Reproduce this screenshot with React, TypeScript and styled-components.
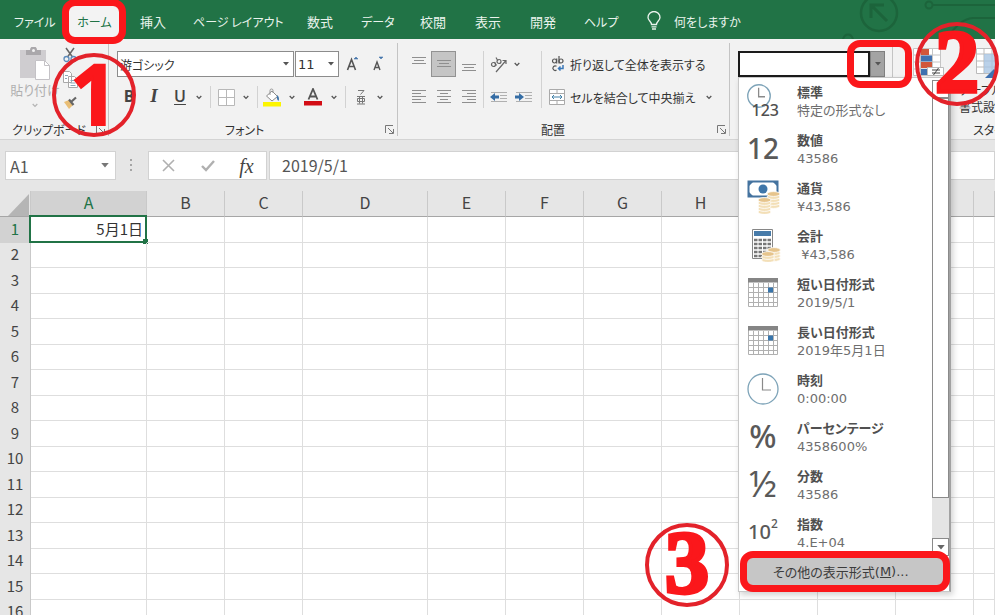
import React from 'react';
import styled, { createGlobalStyle, css } from 'styled-components';

const jp = `'Noto Sans CJK JP', sans-serif`;
const wide = `'DejaVu Sans', 'Noto Sans CJK JP', sans-serif`;
const red = '#fb171b';
const ring = '#e3222a';

const GlobalStyle = createGlobalStyle`
  * { box-sizing: border-box; }
  body { margin: 0; background: #fff; font-family: ${jp}; font-size: 13px; color: #444; overflow: hidden; }
  button, input, select { font: inherit; color: inherit; }
  svg { display: block; }
`;

const Page = styled.div`
  position: relative;
  height: 100vh;
  overflow: hidden;
  padding-right: 5px;
`;

/* Tabs */
const TabBar = styled.nav`
  position: relative;
  display: flex;
  align-items: flex-end;
  height: 39px;
  padding: 0 0 1px 14px;
  background: #217346;
  overflow: hidden;
`;
const Tab = styled.button<{ $w: number; $active?: boolean; $kana?: boolean }>`
  display: flex;
  align-items: center;
  flex: none;
  width: ${p => p.$w}px;
  height: 34px;
  padding: 0;
  border: 0;
  background: none;
  color: #eaf3ed;
  font-size: ${p => (p.$kana ? 12 : 13)}px;
  font-feature-settings: 'palt';
  white-space: nowrap;
  ${p => p.$active && css`
    justify-content: center;
    background: #f3f3f3;
    color: #217346;
  `}
`;
const Spacer = styled.span<{ $w: number }>`
  flex: none;
  width: ${p => p.$w}px;
`;
const Circuit = styled.svg`
  position: absolute;
  top: 0;
  right: 0;
`;

/* Ribbon */
const Ribbon = styled.section`
  display: flex;
  height: 101px;
  background: #f2f2f2;
  border-bottom: 1px solid #d4d4d4;
`;
const Group = styled.div<{ $w?: number; $pad?: number }>`
  position: relative;
  display: flex;
  flex-direction: column;
  justify-content: space-between;
  flex: ${p => (p.$w ? 'none' : '1 1 0')};
  width: ${p => (p.$w ? p.$w + 'px' : 'auto')};
  min-width: 0;
  overflow: ${p => (p.$w ? 'visible' : 'hidden')};
  padding: 12px 0 0 ${p => p.$pad || 0}px;
  &::after {
    content: '';
    position: absolute;
    right: 0;
    top: 4px;
    bottom: 3px;
    width: ${p => (p.$w ? 1 : 0)}px;
    background: #c4c4c4;
  }
`;
const GroupFooter = styled.div<{ $shift?: number }>`
  display: flex;
  align-items: center;
  justify-content: space-between;
  flex: none;
  height: 20px;
  padding: 0 4px 0 ${p => p.$shift || 0}px;
  color: #333;
  font-size: 12px;
  font-feature-settings: 'palt';
  white-space: nowrap;
`;
const Columns = styled.div`
  display: flex;
  align-items: flex-start;
`;
const Rows = styled.div`
  display: flex;
  flex-direction: column;
  gap: 7px;
`;
const Stack = styled.div`
  display: flex;
  flex-direction: column;
  margin-top: -8px;
`;
const Row = styled.div`
  display: flex;
  align-items: center;
  height: 26px;
`;
const Tool = styled.button<{ $w: number; $on?: boolean }>`
  display: flex;
  align-items: center;
  justify-content: center;
  flex: none;
  width: ${p => p.$w}px;
  height: 26px;
  padding: 0;
  border: ${p => (p.$on ? '1px solid #929292' : '0')};
  background: ${p => (p.$on ? '#c5c5c5' : 'none')};
  ${Stack} & { height: 24px; }
`;
const Glyph = styled.span<{ $kind: 'b' | 'i' | 'u' }>`
  font-family: ${p => (p.$kind === 'i' ? "'Liberation Serif', serif" : "'Open Sans', sans-serif")};
  font-size: ${p => (p.$kind === 'i' ? 19 : 16)}px;
  font-weight: ${p => (p.$kind === 'u' ? 600 : 700)};
  font-style: ${p => (p.$kind === 'i' ? 'italic' : 'normal')};
  text-decoration: ${p => (p.$kind === 'u' ? 'underline' : 'none')};
  text-underline-offset: 2px;
  line-height: 20px;
  padding-bottom: 2px;
`;
const Divider = styled.span<{ $w: number; $h: number }>`
  display: flex;
  justify-content: center;
  flex: none;
  width: ${p => p.$w}px;
  height: ${p => p.$h}px;
  &::before { content: ''; width: 1px; background: #d2d2d2; }
`;
const TextTool = styled.button`
  display: flex;
  align-items: center;
  height: 26px;
  padding: 0;
  border: 0;
  background: none;
  font-size: 12px;
  font-feature-settings: 'palt';
  white-space: nowrap;
  color: #333;
  svg { flex: none; margin: 0 5px 0 2px; }
`;
const PasteTool = styled.button`
  display: flex;
  flex-direction: column;
  align-items: center;
  width: 50px;
  margin: -4px 0 0 10px;
  padding: 0;
  border: 0;
  background: none;
  color: #b0b0b0;
  font-size: 13px;
  line-height: 18px;
  font-feature-settings: 'palt';
  white-space: nowrap;
  svg + svg { margin-top: 4px; }
`;
const SelectBox = styled.label<{ $w: number }>`
  position: relative;
  flex: none;
  width: ${p => p.$w}px;
  height: 26px;
  margin-right: 1px;
  select {
    width: 100%;
    height: 100%;
    padding: 0 2px;
    border: 1px solid #8c8c8c;
    border-radius: 0;
    background: #fff;
    appearance: none;
    color: #333;
    font-family: ${p => (p.$w < 60 ? wide : jp)};
    font-size: ${p => (p.$w < 60 ? 13 : 12)}px;
    font-feature-settings: 'palt';
  }
  svg { position: absolute; right: 5px; top: 11px; pointer-events: none; }
`;
const BigTool = styled.button<{ $w: number; $indent?: number }>`
  display: flex;
  flex-direction: column;
  align-items: center;
  flex: none;
  width: ${p => p.$w}px;
  margin-top: -4px;
  padding: 0 0 0 ${p => p.$indent || 0}px;
  border: 0;
  background: none;
  font-size: 12px;
  line-height: 17px;
  font-feature-settings: 'palt';
  white-space: nowrap;
  text-align: left;
  color: #333;
  gap: 2px;
  span { align-self: flex-start; }
`;

/* Number format combo and menu */
const Combo = styled.div`
  position: relative;
  display: flex;
  width: 147px;
  height: 26px;
  input {
    width: 132px;
    height: 26px;
    padding: 0 4px;
    border: 2px solid #1b1b1b;
    border-radius: 0;
    background: #fff;
    outline: 0;
  }
`;
const ComboArrow = styled.button`
  display: flex;
  align-items: center;
  justify-content: center;
  width: 15px;
  height: 26px;
  padding: 0;
  border: 1px solid #808080;
  background: #a3a3a3;
`;
const Menu = styled.div`
  position: absolute;
  z-index: 2;
  top: 26px;
  left: 0;
  width: 213px;
  background: #fff;
  border: 1px solid #c8c8c8;
  border-right: 2px solid #a2a2a2;
  box-shadow: 2px 3px 6px rgba(0, 0, 0, 0.18);
`;
const MenuBody = styled.div`
  display: flex;
  height: 478px;
  overflow: hidden;
`;
const FormatList = styled.ul`
  flex: 1;
  height: 474px;
  margin: 0;
  padding: 0;
  list-style: none;
  overflow: hidden;
`;
const FormatItem = styled.button`
  display: grid;
  grid-template-columns: 50px 1fr;
  align-items: center;
  width: 100%;
  height: 48px;
  padding: 0 0 2px 8px;
  border: 0;
  background: none;
  text-align: left;
  font-family: ${wide};
  font-size: 13px;
  color: #6e6e6e;
`;
const FormatText = styled.span`
  display: flex;
  flex-direction: column;
  line-height: 19px;
  white-space: pre;
  font-feature-settings: 'palt';
  strong { color: #505050; font-family: ${jp}; font-weight: 700; }
`;
const BigGlyph = styled.span<{ $size: number; $thin?: boolean }>`
  width: 32px;
  padding-bottom: 2px;
  color: #595959;
  font-family: 'Noto Sans', sans-serif;
  font-size: ${p => p.$size}px;
  line-height: 38px;
  font-weight: ${p => (p.$thin ? 400 : 500)};
  text-align: center;
  white-space: nowrap;
  sup { font-size: 12px; line-height: 12px; vertical-align: 11px; }
`;
const ScrollBar = styled.div`
  display: flex;
  flex-direction: column;
  width: 17px;
  margin-top: 2px;
  background: #e4e4e4;
`;
const ScrollEnd = styled.button`
  display: flex;
  align-items: center;
  justify-content: center;
  flex: none;
  height: 18px;
  padding: 0;
  border: 1px solid #8a8a8a;
  background: #fff;
`;
const Thumb = styled.div`
  height: 400px;
  border: 1px solid #8a8a8a;
  background: #fff;
`;
const Track = styled.div`
  flex: 1;
`;
const MoreFormats = styled.button`
  display: flex;
  align-items: center;
  width: 197px;
  height: 30px;
  margin: 0 0 5px 7px;
  padding: 0 0 0 27px;
  border: 0;
  background: #c6c6c6;
  color: #3c3c3c;
  font-family: ${wide};
  font-size: 13px;
  font-feature-settings: 'palt';
  white-space: nowrap;
`;

/* Formula bar */
const FormulaBar = styled.section`
  display: flex;
  align-items: center;
  height: 51px;
  padding-left: 5px;
  background: #e6e6e6;
`;
const Field = styled.div<{ $w?: number }>`
  display: flex;
  align-items: center;
  flex: ${p => (p.$w ? 'none' : '1')};
  width: ${p => (p.$w ? p.$w + 'px' : 'auto')};
  height: 29px;
  border: 1px solid #d2d2d2;
  background: #fff;
  color: #555;
  font-size: 16px;
  input { flex: 1; min-width: 0; height: 27px; padding: 0 0 0 4px; border: 0; background: none; outline: 0; }
`;
const FormulaInput = styled.input`
  && { padding-left: 12px; padding-bottom: 2px; }
`;
const Fx = styled.span`
  font-family: 'Liberation Serif', serif;
  font-style: italic;
  font-size: 20px;
  line-height: 24px;
  color: #444;
`;

/* Sheet */
const Sheet = styled.table`
  width: 100%;
  table-layout: fixed;
  border-collapse: separate;
  border-spacing: 0;
  font-size: 15px;
  line-height: 20px;
  thead th { height: 26px; border-bottom: 1px solid #a6a6a6; font-size: 16px; }
  tbody tr:nth-child(odd) { height: 26px; }
  tbody tr:nth-child(even) { height: 25px; }
`;
const Head = styled.th<{ $on?: boolean }>`
  padding: 0 0 3px;
  background: ${p => (p.$on ? '#d2d2d2' : '#e6e6e6')};
  border-right: 1px solid #c9c9c9;
  color: ${p => (p.$on ? '#217346' : '#444')};
  font-weight: 400;
`;
const Corner = styled(Head)`
  padding: 0;
  vertical-align: bottom;
  svg { margin-left: 8px; }
`;
const Cell = styled.td`
  position: relative;
  padding: 0 3px 2px 0;
  border-right: 1px solid #dedede;
  border-bottom: 1px solid #dedede;
  text-align: right;
  color: #333;
`;
const Selection = styled.span`
  position: absolute;
  inset: -2px -1px -1px -2px;
  border: 2px solid #217346;
  &::after {
    content: '';
    position: absolute;
    right: -3px;
    bottom: -3px;
    width: 5px;
    height: 5px;
    background: #217346;
  }
`;

/* Tutorial marks drawn over the window */
const Frame = styled.div<{ $x: number; $y: number; $w: number; $h: number }>`
  position: absolute;
  z-index: 3;
  left: ${p => p.$x}px;
  top: ${p => p.$y}px;
  width: ${p => p.$w}px;
  height: ${p => p.$h}px;
  border: 7px solid ${red};
  border-radius: 13px;
  pointer-events: none;
`;
const Step = styled.div<{ $x: number; $y: number; $sans?: boolean }>`
  position: absolute;
  z-index: 4;
  left: ${p => p.$x}px;
  top: ${p => p.$y}px;
  display: flex;
  align-items: center;
  justify-content: center;
  width: 84px;
  height: 84px;
  padding-bottom: 4px;
  border: 4px solid ${ring};
  border-radius: 50%;
  color: ${red};
  font-family: ${p => (p.$sans ? "'Open Sans', sans-serif" : "'Liberation Serif', serif")};
  font-size: ${p => (p.$sans ? 84 : 88)}px;
  font-weight: 700;
  line-height: 76px;
  -webkit-text-stroke: ${p => (p.$sans ? 2 : 4)}px ${red};
  stroke-linejoin: round;
  pointer-events: none;
`;

/* Icons */
const Chevron = ({ c = '#555' }: { c?: string }) => (
  <svg width="6" height="5" viewBox="0 0 6 5"><path d="M.7 1 3 3.4 5.3 1" fill="none" stroke={c} strokeWidth="1.3" /></svg>
);
const Arrow = ({ w = 6, c = '#555' }: { w?: number; c?: string }) => (
  <svg width={w} height={w / 2 + 1} viewBox="0 0 6 4"><path d="M0 0h6L3 3.5z" fill={c} /></svg>
);
const Launcher = () => (
  <svg width="9" height="9" viewBox="0 0 9 9" fill="none" stroke="#777"><path d="M.5 8V.5H8M3 3l5 5M8.500 4v4.500H4" /></svg>
);
const Lines = ({ xs, dy = 0 }: { xs: [number, number][]; dy?: number }) => (
  <svg width="16" height="20" viewBox="0 0 16 20" stroke="#8f8f8f">
    {xs.map(([a, b], i) => <path key={i} d={`M${a} ${4.5 + dy + i * 3}H${b}`} />)}
  </svg>
);
const Clipboard = () => (
  <svg width="32" height="34" viewBox="0 0 32 34">
    <path d="M1 3h26v28H1z" fill="#cfcdd0" />
    <path d="M7 8V3h4a3.500 3.500 0 0 1 7 0h4v5z" fill="#aaa8ab" />
    <circle cx="14.500" cy="3.500" r="1.500" fill="#f2f2f2" />
    <path d="M16.500 13.500h9l5 5v14h-14z" fill="#fff" stroke="#c4c2c6" />
    <path d="M25.500 13.500v5h5" fill="none" stroke="#c4c2c6" />
  </svg>
);
const Scissors = () => (
  <svg width="14" height="16" viewBox="0 0 14 16" fill="none">
    <path d="M3 1l6.500 9M11 1 4.500 10" stroke="#666" strokeWidth="1.500" />
    <circle cx="3.500" cy="12" r="2.500" stroke="#5d8bbb" strokeWidth="1.300" /><circle cx="10.500" cy="12" r="2.500" stroke="#5d8bbb" strokeWidth="1.300" />
  </svg>
);
const Copy = () => (
  <svg width="15" height="17" viewBox="0 0 15 17" fill="#fff" stroke="#a8a8a8">
    <path d="M.5.5h6l2 2v9h-8zM5.500 5.500h6l3 3v8h-9z" /><path d="M2 4.500h3M2 7.500h2M7.500 9.500h4M7.500 12h5M7.500 14.500h5" stroke="#8aa9b8" />
  </svg>
);
const Brush = () => (
  <svg width="15" height="14" viewBox="0 0 15 14">
    <path d="M1 6l5-2 4 5-4 4z" fill="#e9be76" /><path d="M6 3.500 10.500 9M8 6l5-4.500" stroke="#666" strokeWidth="2.200" />
  </svg>
);
const GrowA = ({ up }: { up?: boolean }) => (
  <svg width="14" height="17" viewBox="0 0 14 17" fill="none">
    {up ? <path d="M1.500 14 5.500 3.500 9.500 14M3 10.500h5" stroke="#555" strokeWidth="1.600" />
      : <path d="M2 14 5 6l3 8M3 11.500h4" stroke="#555" strokeWidth="1.400" />}
    <path d={up ? 'M8 3l2-2 2 2z' : 'M7 1l2 2 2-2z'} fill="#4677ad" stroke="#4677ad" strokeWidth=".6" />
  </svg>
);
const Borders = () => (
  <svg width="17" height="17" viewBox="0 0 17 17" fill="#fff" stroke="#b8b8b8"><path d="M.5.5h16v16H.5zM8.500.5v16M.5 8.500h16" /></svg>
);
const Bucket = () => (
  <svg width="19" height="19" viewBox="0 0 19 19">
    <path d="M3.500 8 9 3l5.500 5.500L9 13z" fill="#fff" stroke="#8a8a8a" /><path d="M7 7V2.500a1.500 1.500 0 0 1 3 0V5" fill="none" stroke="#999" />
    <path d="M14 7c2 1.500 2.500 4 1.500 6-1.500-1-2-3-1.500-6z" fill="#3d73a8" /><path d="M0 14h18v4.500H0z" fill="#fcf500" />
  </svg>
);
const FontColor = () => (
  <svg width="18" height="18" viewBox="0 0 18 18"><path d="M4.500 11.500 9 1l4.500 10.500M6 8.500h6" fill="none" stroke="#555" strokeWidth="1.800" /><path d="M0 13h18v4.500H0z" fill="#d30d15" /></svg>
);
const Ruby = () => (
  <svg width="10" height="16" viewBox="0 0 10 16" fill="none" stroke="#777"><path d="M2 1.500h6L4.500 5.500M1 7.500h8M3.500 7.500v7M6.500 7.500v7M1.500 9.500h7v3h-7zM1 15h8" /></svg>
);
const Orientation = () => (
  <svg width="18" height="17" viewBox="0 0 18 17" fill="none" stroke="#666" strokeWidth="1.200">
    <path d="M6 16 16 4.500M12.500 4.500H16V8" /><circle cx="3.500" cy="8.500" r="2" /><path d="M4.500 6l2 3.500" /><circle cx="9" cy="5.500" r="2" /><path d="M6 1.500l2 3.500" />
  </svg>
);
const Indent = ({ right }: { right?: boolean }) => (
  <svg width="17" height="13" viewBox="0 0 17 13" fill="none">
    <path d="M1 1.500h16M10 4.500h7M10 7.500h7M1 10.500h16" stroke="#b0b0b0" />
    <path d={right ? 'M0 6h5' : 'M9 6H4'} stroke="#356da5" strokeWidth="3" />
    <path d={right ? 'M4 2l5 4-5 4z' : 'M5 2 0 6l5 4z'} fill="#356da5" />
  </svg>
);
const Wrap = () => (
  <svg width="16" height="17" viewBox="0 0 16 17" fill="none" stroke="#555" strokeWidth="1.200">
    <circle cx="5.500" cy="5" r="2" /><path d="M7.700 2.500v5M10 0v7.500" /><circle cx="12" cy="5" r="2" />
    <path d="M7.500 10.300a2.300 2.300 0 1 0 0 3.800" /><path d="M14 9v3.500H9.500M11.500 10.500l-2 2 2 2" stroke="#3b78b8" strokeWidth="1.500" />
  </svg>
);
const Merge = () => (
  <svg width="16" height="17" viewBox="0 0 16 17" fill="#fff" stroke="#aaa">
    <path d="M.5.5h15v15H.5zM.5 4.500h15M.5 11.500h15M8 .5v4M8 11.500v4" /><path d="M3 8h10M5 6 3 8l2 2M11 6l2 2-2 2" fill="none" stroke="#4381a8" />
  </svg>
);
const Bulb = () => (
  <svg width="14" height="20" viewBox="0 0 14 20" fill="none" stroke="#eaf3ed" strokeWidth="1.300">
    <path d="M4.500 13.500C4.500 10.500 1 9.500 1 6.500a6 6 0 0 1 12 0c0 3-3.500 4-3.500 7zM4.500 15.800h5M5 18h4" />
  </svg>
);
const CondFormat = () => (
  <svg width="32" height="32" viewBox="0 0 32 32">
    <path d="M.5 1.500h27v27H.5zM.5 8h27M.5 15h27M.5 22h27M7.500 1.500v27M19.500 1.500v27" fill="#fff" stroke="#c5c5c5" />
    <path d="M8 2h8v6H8zM8 15h11v6H8z" fill="#d1573a" /><path d="M8 8.500h11v6H8zM8 22h6v6H8z" fill="#3f71b0" />
    <path d="M14.500 20.500h16v8h-16z" fill="#fff" stroke="#bbb" /><path d="M19 23h8M19 26h8M25.500 21l-5 7" stroke="#444" />
  </svg>
);
const TableFormat = () => (
  <svg width="32" height="32" viewBox="0 0 32 32">
    <path d="M.5 1.500h31v25H.5zM.5 7h31M.5 14h31M.5 20h31M8 1.500v25M16 1.500v25M24 1.500v25" fill="#fff" stroke="#bbb" />
    <path d="M8 7h23v19H8z" fill="#a9c5e4" fillOpacity=".8" /><path d="M9 31l9-9 4 5-5 4z" fill="#3f71b0" />
  </svg>
);

const ClockFace = ({ s }: { s: number }) => (
  <svg width={s} height={s} viewBox="0 0 32 32" fill="none"><circle cx="16" cy="16" r="15" fill="#fff" stroke="#7da3b8" strokeWidth={s > 30 ? 1.3 : 1.8} /><path d="M15.500 5v12H24" stroke="#8a8a8a" strokeWidth={s > 30 ? 1.2 : 1.7} /></svg>
);
const GeneralBox = styled.span`
  display: grid;
  width: 32px;
  height: 34px;
  color: #505050;
  font-family: 'Noto Sans', sans-serif;
  font-size: 16px;
  line-height: 16px;
  svg, b { grid-area: 1 / 1; }
  b { align-self: end; justify-self: end; font-weight: 500; }
`;
const Coins = ({ x, y, n }: { x: number; y: number; n: number }) => (
  <g>
    {Array.from({ length: n }, (_, i) => (
      <ellipse key={i} cx={x} cy={y + (n - 1 - i) * 3} rx="6.500" ry="2.400" fill={i === n - 1 ? '#e6c48c' : '#f3dfb7'} stroke="#fff" strokeWidth=".8" />
    ))}
  </g>
);
const Money = () => (
  <svg width="34" height="34" viewBox="0 0 34 34">
    <path d="M1.500 1.500h29v15h-29z" fill="#fff" stroke="#44739f" strokeWidth="2" />
    <path d="M1 1h6L1 7zM31 1h-6l6 6zM1 17h6l-6-6z" fill="#44739f" /><circle cx="16" cy="9" r="4.500" fill="#3f76a9" />
    <Coins x={26.5} y={14} n={5} /><Coins x={17.5} y={20} n={5} />
  </svg>
);
const Calc = () => (
  <svg width="34" height="34" viewBox="0 0 34 34">
    <path d="M5.500 1.500h20v29h-20z" fill="#fff" stroke="#868686" /><path d="M7 3h17v5H7z" fill="#477ba9" />
    <path d="M7 12h17M7 16h17M7 20h17M7 24h17M7 28h17" stroke="#777" strokeWidth="2.600" strokeDasharray="3.500 1" />
    <Coins x={27} y={22} n={4} /><Coins x={21} y={26} n={3} />
  </svg>
);
const Calendar = () => (
  <svg width="32" height="30" viewBox="0 0 32 30">
    <path d="M1.500.5h29v28h-29zM6.500 5v24M11.500 5v24M16.500 5v24M21.500 5v24M26.500 5v24M1 9.500h30M1 14.500h30M1 19.500h30M1 24.500h30" fill="#fff" stroke="#b0b0b0" />
    <path d="M1 0h30v4.500H1z" fill="#858585" /><path d="M21 9.500h5v5h-5z" fill="#3875ab" />
  </svg>
);

const tabs: { name: string; w: number; gap: number; kana?: boolean }[] = [
  { name: '挿入', w: 26, gap: 27 },
  { name: 'ページ レイアウト', w: 86, gap: 28, kana: true },
  { name: '数式', w: 26, gap: 28 },
  { name: 'データ', w: 31, gap: 28, kana: true },
  { name: '校閲', w: 26, gap: 29 },
  { name: '表示', w: 26, gap: 29 },
  { name: '開発', w: 26, gap: 28 },
  { name: 'ヘルプ', w: 33, gap: 30, kana: true },
];
const formats: [string, string, React.ReactNode][] = [
  ['標準', '特定の形式なし', <GeneralBox><ClockFace s={24} /><b>123</b></GeneralBox>],
  ['数値', '43586', <BigGlyph $size={28}>12</BigGlyph>],
  ['通貨', '¥43,586', <Money />],
  ['会計', ' ¥43,586', <Calc />],
  ['短い日付形式', '2019/5/1', <Calendar />],
  ['長い日付形式', '2019年5月1日', <Calendar />],
  ['時刻', '0:00:00', <ClockFace s={32} />],
  ['パーセンテージ', '4358600%', <BigGlyph $size={32}>%</BigGlyph>],
  ['分数', '43586', <BigGlyph $size={36} $thin>½</BigGlyph>],
  ['指数', '4.E+04', <BigGlyph $size={20}>10<sup>2</sup></BigGlyph>],
];
const columns: [string, number | null][] = [
  ['A', 116], ['B', 78], ['C', 78], ['D', 125], ['E', 78], ['F', 78], ['G', 78], ['H', 78], ['I', 78], ['J', 78], ['K', 78], ['', null],
];
const rows = Array.from({ length: 16 }, (_, i) => i + 1);

function NumberFormat() {
  return (
    <Combo>
      <input aria-label="表示形式" defaultValue="" />
      <ComboArrow aria-label="表示形式の一覧"><Arrow /></ComboArrow>
      <Menu>
        <MenuBody>
          <FormatList>
            {formats.map(([name, sample, icon]) => (
              <li key={name}>
                <FormatItem>
                  {icon}
                  <FormatText><strong>{name}</strong><span>{sample}</span></FormatText>
                </FormatItem>
              </li>
            ))}
          </FormatList>
          <ScrollBar>
            <ScrollEnd aria-label="上へ" />
            <Thumb />
            <Track />
            <ScrollEnd aria-label="下へ"><Arrow w={8} c="#666" /></ScrollEnd>
          </ScrollBar>
        </MenuBody>
        <MoreFormats>その他の表示形式(<u>M</u>)...</MoreFormats>
      </Menu>
    </Combo>
  );
}

export default function App() {
  return (
    <Page>
      <GlobalStyle />
      <TabBar>
        <Circuit width="160" height="39" viewBox="0 0 160 39" fill="none" stroke="#1c643b" strokeWidth="2">
          <circle cx="44" cy="13" r="18" strokeWidth="2.500" />
          <path d="M52 21 37 6M36 18V5h13" strokeWidth="3" />
          <circle cx="94" cy="5" r="3.500" /><path d="M98 5h62M112 39c6-10 14-20 26-21h22M8 39c2-6 8-6 10 0" />
        </Circuit>
        <Tab $w={43} $kana>ファイル</Tab>
        <Spacer $w={9} />
        <Tab $w={57} $active $kana>ホーム</Tab>
        <Spacer $w={17} />
        {tabs.map(t => (
          <React.Fragment key={t.name}>
            <Tab $w={t.w} $kana={t.kana}>{t.name}</Tab>
            <Spacer $w={t.gap} />
          </React.Fragment>
        ))}
        <Tab $w={27} aria-label="操作アシスト"><Bulb /></Tab>
        <Tab $w={70} $kana>何をしますか</Tab>
      </TabBar>

      <Ribbon>
        <Group $w={109}>
          <Columns>
            <PasteTool><Clipboard />貼り付け<Chevron c="#b5b5b5" /></PasteTool>
            <Stack>
              <Tool $w={20} aria-label="切り取り"><Scissors /></Tool>
              <Tool $w={20} aria-label="コピー"><Copy /></Tool>
              <Tool $w={20} aria-label="書式のコピー"><Brush /></Tool>
            </Stack>
          </Columns>
          <GroupFooter $shift={12}>クリップボード<Launcher /></GroupFooter>
        </Group>

        <Group $w={289} $pad={8}>
          <Rows>
            <Row>
              <SelectBox $w={177}><select aria-label="フォント"><option>游ゴシック</option></select><Arrow /></SelectBox>
              <SelectBox $w={44}><select aria-label="フォント サイズ"><option>11</option></select><Arrow /></SelectBox>
              <Tool $w={26} aria-label="拡大"><GrowA up /></Tool>
              <Tool $w={26} aria-label="縮小"><GrowA /></Tool>
            </Row>
            <Row>
              <Tool $w={24}><Glyph $kind="b">B</Glyph></Tool>
              <Tool $w={26}><Glyph $kind="i">I</Glyph></Tool>
              <Tool $w={26}><Glyph $kind="u">U</Glyph></Tool>
              <Tool $w={12} aria-label="下線の種類"><Chevron /></Tool>
              <Divider $w={11} $h={22} />
              <Tool $w={20} aria-label="罫線"><Borders /></Tool>
              <Tool $w={20} aria-label="罫線の種類"><Chevron /></Tool>
              <Divider $w={3} $h={22} />
              <Tool $w={27} aria-label="塗りつぶし"><Bucket /></Tool>
              <Tool $w={12} aria-label="塗りつぶしの色"><Chevron /></Tool>
              <Tool $w={30} aria-label="フォントの色"><FontColor /></Tool>
              <Tool $w={12} aria-label="色の一覧"><Chevron /></Tool>
              <Divider $w={11} $h={22} />
              <Tool $w={20} aria-label="ふりがな"><Ruby /></Tool>
              <Tool $w={18} aria-label="ふりがなの設定"><Chevron /></Tool>
            </Row>
          </Rows>
          <GroupFooter $shift={108}>フォント<Launcher /></GroupFooter>
        </Group>

        <Group $w={332} $pad={8}>
          <Columns>
            <Rows>
              <Row>
                <Tool $w={25} aria-label="上揃え"><Lines dy={-1} xs={[[1, 15], [3, 13], [1, 15]]} /></Tool>
                <Tool $w={25} $on aria-label="上下中央揃え"><Lines dy={2} xs={[[1, 15], [3, 13], [1, 15]]} /></Tool>
                <Tool $w={25} aria-label="下揃え"><Lines dy={6} xs={[[1, 15], [3, 13], [1, 15]]} /></Tool>
              </Row>
              <Row>
                <Tool $w={25} aria-label="左揃え"><Lines dy={-1} xs={[[1, 15], [1, 10], [1, 15], [1, 10], [1, 15]]} /></Tool>
                <Tool $w={25} aria-label="中央揃え"><Lines dy={-1} xs={[[1, 15], [4, 12], [1, 15], [4, 12], [1, 15]]} /></Tool>
                <Tool $w={25} aria-label="右揃え"><Lines dy={-1} xs={[[1, 15], [6, 15], [1, 15], [6, 15], [1, 15]]} /></Tool>
              </Row>
            </Rows>
            <Divider $w={5} $h={57} />
            <Rows>
              <Row>
                <Tool $w={25} aria-label="方向"><Orientation /></Tool>
                <Tool $w={12} aria-label="方向の一覧"><Chevron /></Tool>
              </Row>
              <Row>
                <Tool $w={25} aria-label="インデントを減らす"><Indent /></Tool>
                <Tool $w={25} aria-label="インデントを増やす"><Indent right /></Tool>
              </Row>
            </Rows>
            <Divider $w={11} $h={57} />
            <Rows>
              <TextTool><Wrap />折り返して全体を表示する</TextTool>
              <Row>
                <TextTool><Merge />セルを結合して中央揃え</TextTool>
                <Tool $w={28} aria-label="結合の種類"><Chevron /></Tool>
              </Row>
            </Rows>
          </Columns>
          <GroupFooter $shift={135}>配置<Launcher /></GroupFooter>
        </Group>

        <Group $w={163} $pad={8}>
          <NumberFormat />
        </Group>

        <Group>
          <Columns>
            <BigTool $w={66} $indent={6} aria-label="条件付き書式"><CondFormat /></BigTool>
            <BigTool $w={66}><TableFormat /><span>テーブルとして<br />書式設定</span></BigTool>
          </Columns>
          <GroupFooter $shift={80}>スタイル</GroupFooter>
        </Group>
      </Ribbon>

      <FormulaBar>
        <Field $w={111}>
          <input aria-label="名前ボックス" defaultValue="A1" />
          <Tool $w={20} aria-label="名前の一覧"><Arrow w={8} c="#777" /></Tool>
        </Field>
        <Spacer $w={13} />
        <svg width="5" height="14" viewBox="0 0 5 14" fill="#a5a5a5"><path d="M1 0h2v2H1zM1 5h2v2H1zM1 10h2v2H1z" /></svg>
        <Spacer $w={14} />
        <Field $w={119}>
          <Tool $w={39} aria-label="キャンセル"><svg width="13" height="13" viewBox="0 0 13 13" stroke="#b0b0b0" strokeWidth="1.600"><path d="M1 1l11 11M12 1 1 12" /></svg></Tool>
          <Tool $w={39} aria-label="入力"><svg width="14" height="12" viewBox="0 0 14 12" fill="none" stroke="#b0b0b0" strokeWidth="2.400"><path d="M1 6l4 4 8-9" /></svg></Tool>
          <Tool $w={39} aria-label="関数の挿入"><Fx>fx</Fx></Tool>
        </Field>
        <Spacer $w={2} />
        <Field><FormulaInput aria-label="数式バー" defaultValue="2019/5/1" /></Field>
      </FormulaBar>

      <Sheet>
        <colgroup>
          <col width={31} />
          {columns.map(([name, w]) => <col key={name} width={w ?? undefined} />)}
        </colgroup>
        <thead>
          <tr>
            <Corner aria-label="すべて選択"><svg width="21" height="22" viewBox="0 0 21 22"><path d="M21 0v22H0z" fill="#b5b5b5" /></svg></Corner>
            {columns.map(([name]) => <Head key={name} $on={name === 'A'}>{name}</Head>)}
          </tr>
        </thead>
        <tbody>
          {rows.map(r => (
            <tr key={r}>
              <Head $on={r === 1}>{r}</Head>
              {columns.map(([name]) => (
                <Cell key={name}>{r === 1 && name === 'A' ? <>5月1日<Selection /></> : null}</Cell>
              ))}
            </tr>
          ))}
        </tbody>
      </Sheet>

      <Frame $x={62} $y={-1} $w={64} $h={45} />
      <Frame $x={847} $y={40} $w={65} $h={48} />
      <Frame $x={740} $y={551} $w={210} $h={41} />
      <Step $x={52} $y={53} $sans>1</Step>
      <Step $x={915} $y={22}>2</Step>
      <Step $x={645} $y={523}>3</Step>
    </Page>
  );
}
